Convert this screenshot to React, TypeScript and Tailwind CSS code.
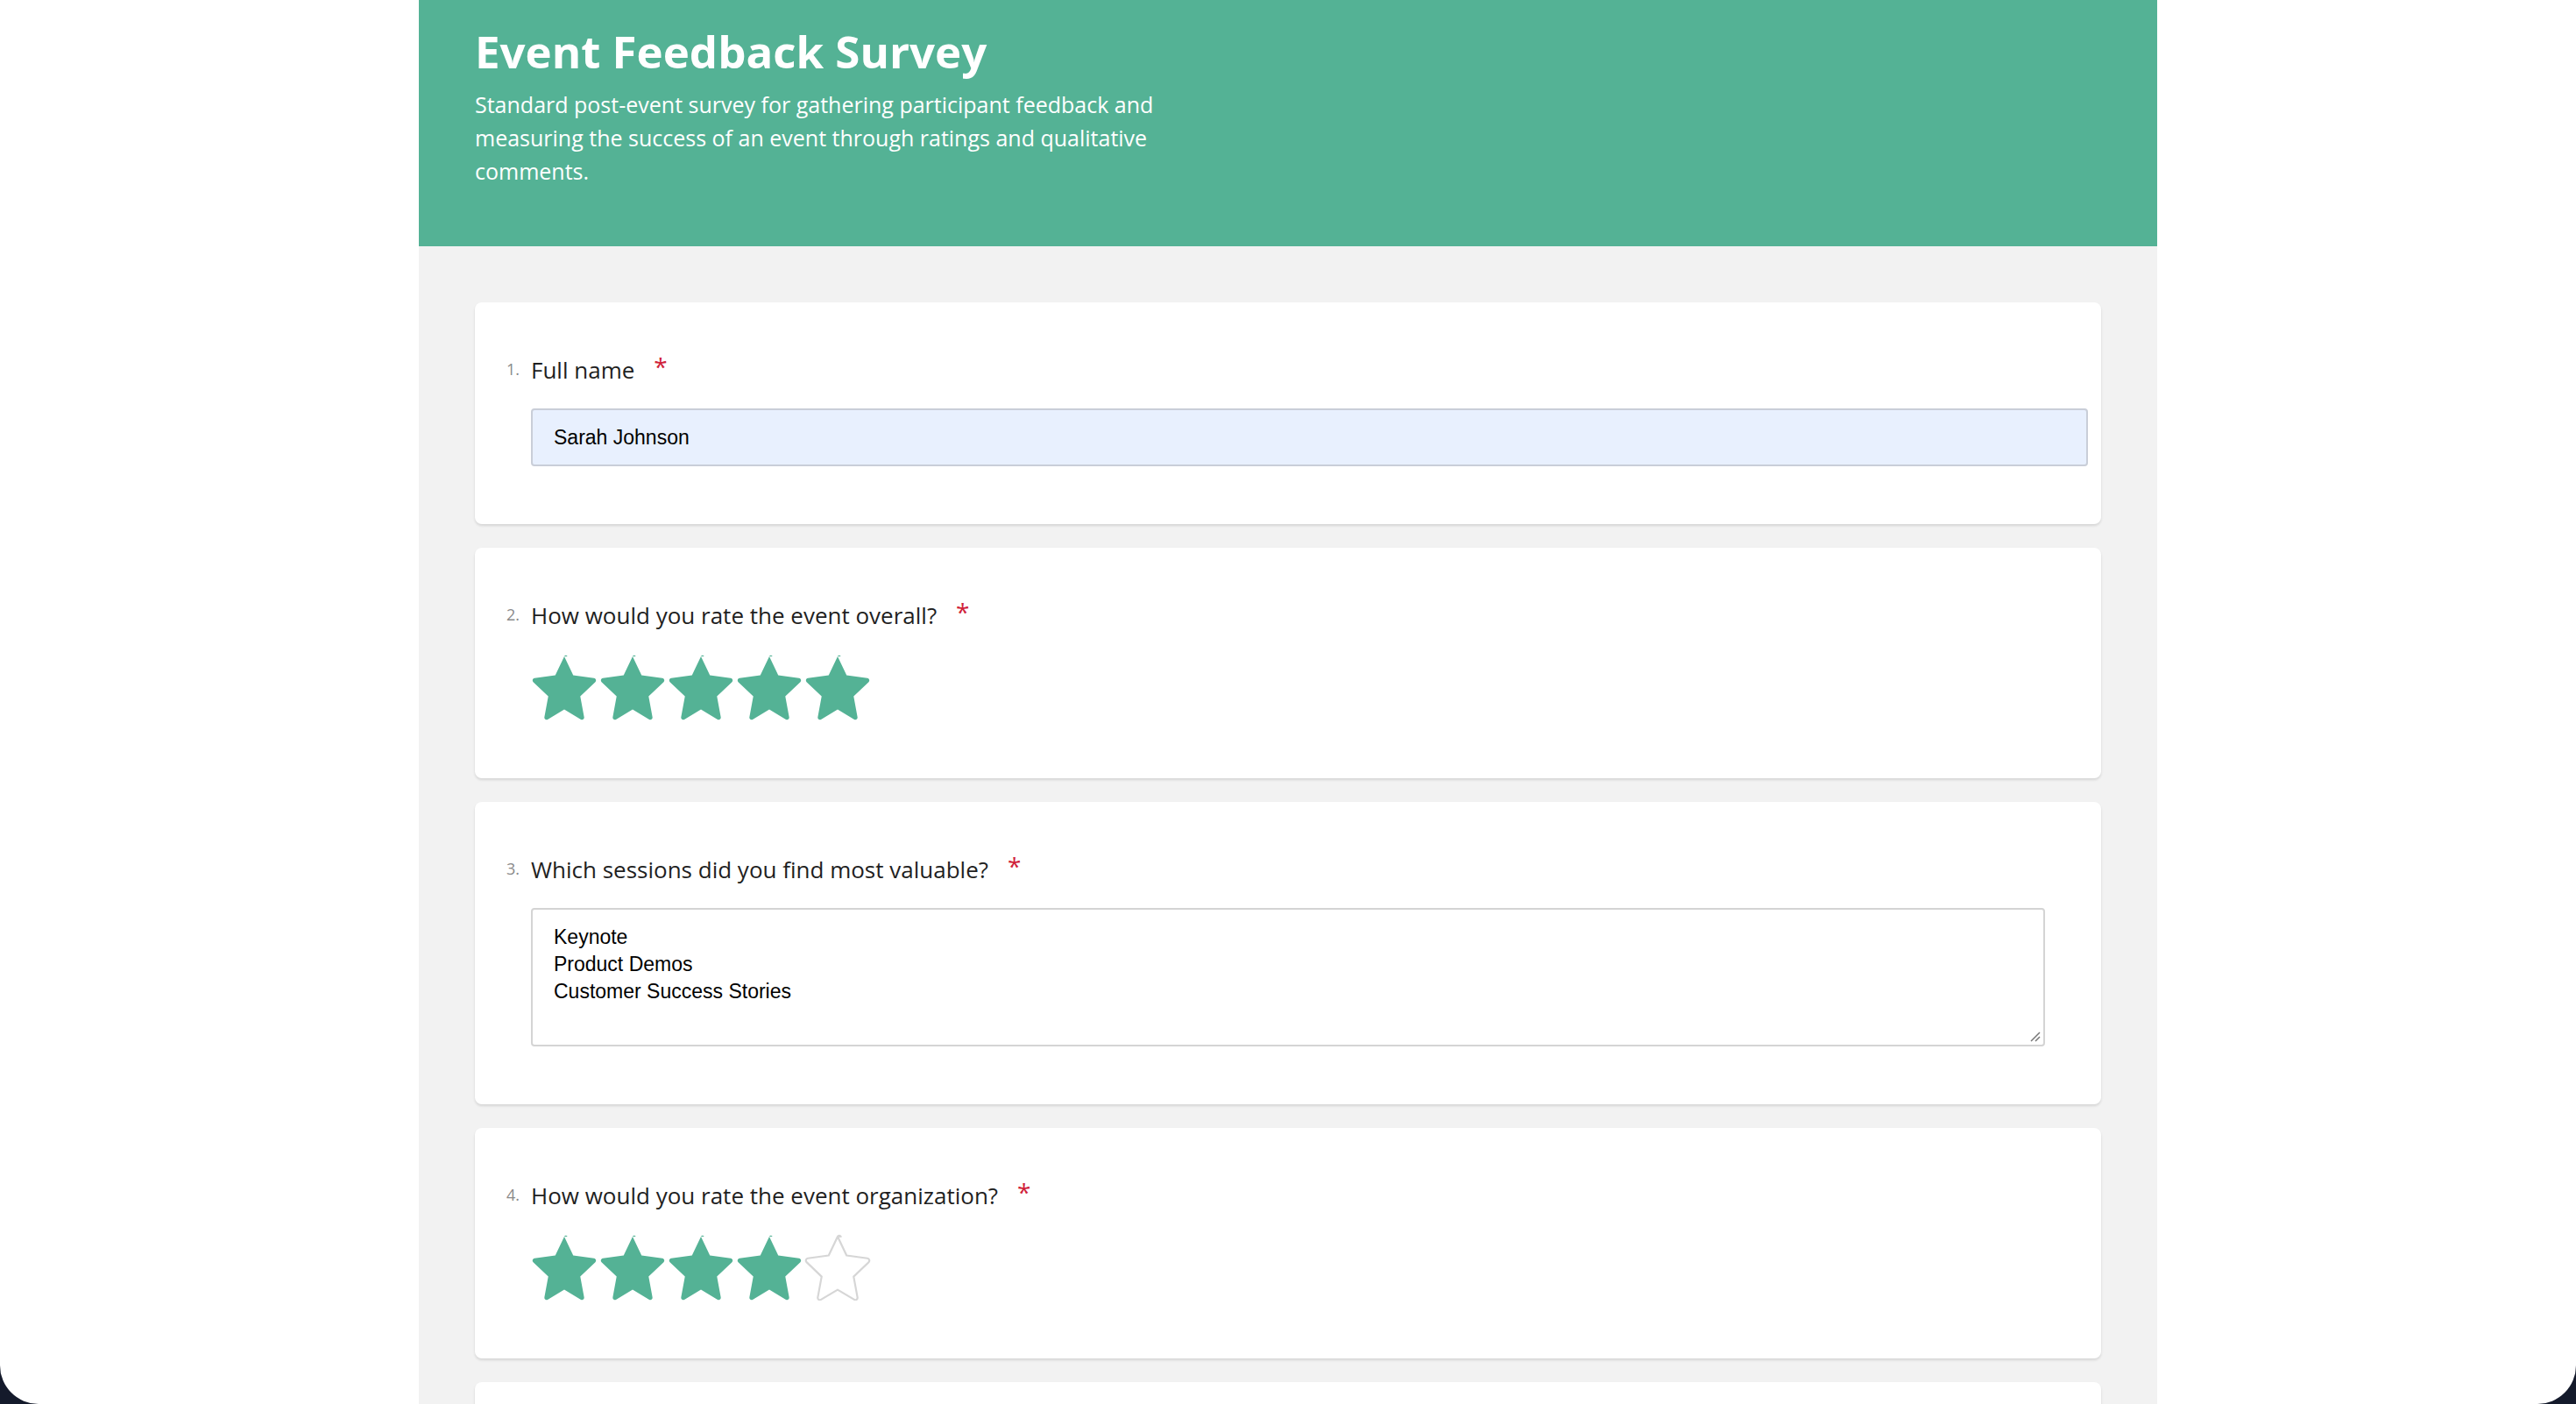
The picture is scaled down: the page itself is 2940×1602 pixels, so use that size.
const FONT = { fontFamily: '"Open Sans", "Noto Sans", sans-serif' };
const ARIAL = { fontFamily: '"Liberation Sans", Arial, sans-serif' };

function Star({ filled }: { filled: boolean }) {
  return (
    <svg viewBox="1.6 1.6 20.8 20.8" className="h-[76px] w-[76px] mr-[2px]">
      <path
        d="M12 2.4l2.8 5.9 6.5.9c.6.1.8.8.4 1.2l-4.7 4.5 1.2 6.5c.1.6-.5 1-1 .7L12 19l-5.2 3.1c-.5.3-1.1-.1-1-.7l1.2-6.5-4.7-4.5c-.4-.4-.2-1.1.4-1.2l6.5-.9 2.8-5.9c.2-.4.8-.4 1 0z"
        fill={filled ? "#54b295" : "none"}
        stroke={filled ? "#54b295" : "#d6d6d6"}
        strokeWidth={filled ? 0 : 0.6}
        strokeLinejoin="round"
      />
    </svg>
  );
}

function Question({ n, label, children }: { n: number; label: string; children: React.ReactNode }) {
  return (
    <div className="rounded-[8px] bg-white px-[36px] pt-[58px] pb-[66px] shadow-[0_2px_3px_rgba(0,0,0,0.12)]">
      <div className="flex min-h-[36px] items-start" style={FONT}>
        <span className="mt-[5px] w-[28px] text-[18px] text-[#8a8a8a]">{n}.</span>
        <span className="text-[26px] font-medium text-[#1f1f1f]">{label}</span>
        <span className="ml-[22px] -mt-[6px] text-[28px] text-[#d0223a]">{label ? "*" : ""}</span>
      </div>
      <div className="mt-[24px] pl-[28px]">{children}</div>
    </div>
  );
}

export default function App() {
  return (
    <div className="min-h-screen bg-[#141a2b]">
      <div className="flex h-[1602px] justify-center overflow-hidden rounded-b-[44px] bg-white">
        <div className="w-[1984px] bg-[#f2f2f2]">
          <div className="h-[281px] bg-[#54b295] px-[64px] pt-[24px] text-white" style={FONT}>
            <h1 className="text-[51px] font-bold leading-[68px]">Event Feedback Survey</h1>
            <p className="mt-[8px] w-[800px] text-[25px] font-medium leading-[38px]">
              Standard post-event survey for gathering participant feedback and measuring the success of an event through ratings and qualitative comments.
            </p>
          </div>
          <div className="flex flex-col gap-[27px] px-[64px] pt-[64px]">
            <Question n={1} label="Full name">
              <div
                className="flex h-[66px] w-[1777px] items-center rounded-[4px] border-2 border-[#c9ced8] bg-[#e8f0fe] px-[24px] text-[23px] text-black"
                style={ARIAL}
              >
                Sarah Johnson
              </div>
            </Question>
            <Question n={2} label="How would you rate the event overall?">
              <div className="flex">
                {[1, 2, 3, 4, 5].map((i) => <Star key={i} filled />)}
              </div>
            </Question>
            <Question n={3} label="Which sessions did you find most valuable?">
              <div
                className="relative h-[158px] w-[1728px] rounded-[4px] border-2 border-[#d4d4d4] px-[24px] pt-[16px] text-[23px] leading-[31px] text-black"
                style={ARIAL}
              >
                <div>Keynote</div>
                <div>Product Demos</div>
                <div>Customer Success Stories</div>
                <svg className="absolute bottom-[2px] right-[2px] h-[16px] w-[16px]" viewBox="0 0 16 16">
                  <path d="M14 4L4 14M14 9l-5 5" stroke="#777" strokeWidth="1.5" />
                </svg>
              </div>
            </Question>
            <Question n={4} label="How would you rate the event organization?">
              <div className="flex">
                {[1, 2, 3, 4, 5].map((i) => <Star key={i} filled={i <= 4} />)}
              </div>
            </Question>
            <Question n={5} label="">
              <div className="h-[80px]" />
            </Question>
          </div>
        </div>
      </div>
    </div>
  );
}
